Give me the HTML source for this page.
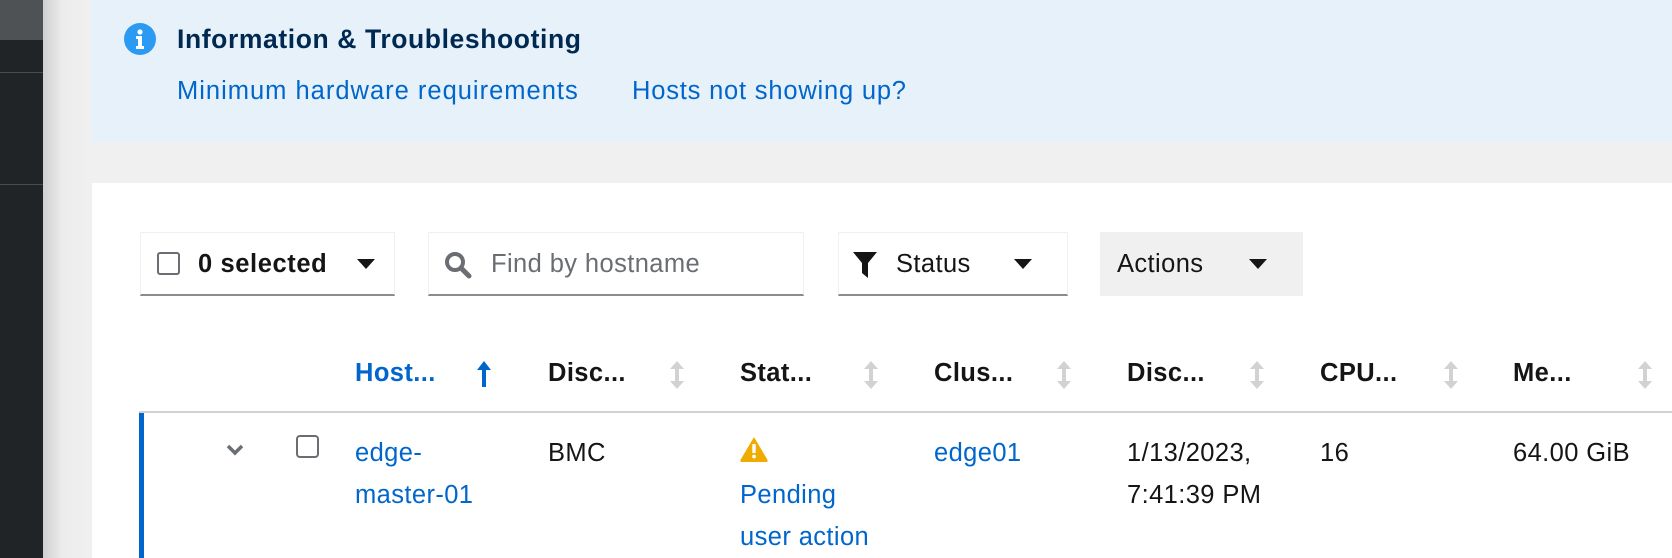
<!DOCTYPE html>
<html><head><meta charset="utf-8"><style>
*{margin:0;padding:0;box-sizing:border-box}
body{width:1672px;height:558px;overflow:hidden;background:#f0f0f0;font-family:"Liberation Sans",sans-serif;position:relative;color:#151515}
.a{position:absolute;white-space:nowrap}
.t{font-size:25.5px;line-height:30px;letter-spacing:0.4px}
.blue{color:#0066cc}
.b{font-weight:bold}
</style></head><body>
<div class="a" style="left:0;top:0;width:43px;height:558px;background:#212427"></div>
<div class="a" style="left:0;top:0;width:43px;height:40px;background:#4f5255"></div>
<div class="a" style="left:0;top:72px;width:43px;height:1px;background:#4a4d50"></div>
<div class="a" style="left:0;top:184px;width:43px;height:1px;background:#4a4d50"></div>
<div class="a" style="left:43px;top:0;width:48px;height:558px;background:linear-gradient(90deg,#d0d0d0,#ececec 40%,#f0f0f0)"></div>
<div class="a" style="left:91px;top:0;width:1581px;height:142px;background:#e7f1fa"></div>
<svg class="a" style="left:124px;top:23px" width="32" height="32" viewBox="0 0 32 32"><circle cx="16" cy="16" r="16" fill="#2b9af3"/><circle cx="16" cy="9" r="2.6" fill="#fff"/><path d="M12 13h6v10h2v3h-8v-3h2v-7h-2z" fill="#fff"/></svg>
<div class="a t b" style="left:177px;top:24px;color:#002952;font-size:26.5px;letter-spacing:0.6px">Information &amp; Troubleshooting</div>
<div class="a t blue" style="left:177px;top:76px;letter-spacing:1px">Minimum hardware requirements</div>
<div class="a t blue" style="left:632px;top:76px;letter-spacing:0.8px">Hosts not showing up?</div>
<div class="a" style="left:92px;top:183px;width:1580px;height:375px;background:#fff"></div>

<div class="a" style="left:140px;top:232px;width:255px;height:64px;border:1px solid #f0f0f0;border-bottom:2px solid #8a8d90"></div>
<div class="a" style="left:157px;top:252px;width:23px;height:23px;border:2px solid #6a6e73;border-radius:3px"></div>
<div class="a t b" style="left:198px;top:249px;letter-spacing:0.6px">0 selected</div>
<svg class="a" style="left:357px;top:259px" width="18" height="10"><path d="M0 0h18L9 10z" fill="#151515"/></svg>

<div class="a" style="left:428px;top:232px;width:376px;height:64px;border:1px solid #f0f0f0;border-bottom:2px solid #8a8d90"></div>
<svg class="a" style="left:444px;top:251px" width="28" height="28" viewBox="0 0 28 28"><circle cx="11" cy="11" r="8" fill="none" stroke="#6a6e73" stroke-width="4"/><path d="M17 17l8 8" stroke="#6a6e73" stroke-width="5" stroke-linecap="round"/></svg>
<div class="a t" style="left:491px;top:249px;color:#6a6e73">Find by hostname</div>

<div class="a" style="left:838px;top:232px;width:230px;height:64px;border:1px solid #f0f0f0;border-bottom:2px solid #8a8d90"></div>
<svg class="a" style="left:853px;top:252px" width="24" height="26" viewBox="0 0 24 26"><path d="M0 0h24L15 11v15l-6-5V11z" fill="#151515"/></svg>
<div class="a t" style="left:896px;top:249px">Status</div>
<svg class="a" style="left:1014px;top:259px" width="18" height="10"><path d="M0 0h18L9 10z" fill="#151515"/></svg>

<div class="a" style="left:1100px;top:232px;width:203px;height:64px;background:#f0f0f0"></div>
<div class="a t" style="left:1117px;top:249px">Actions</div>
<svg class="a" style="left:1249px;top:259px" width="18" height="10"><path d="M0 0h18L9 10z" fill="#151515"/></svg>

<div class="a t b blue" style="left:355px;top:358px">Host...</div>
<svg class="a" style="left:476px;top:361px" width="16" height="26" viewBox="0 0 16 26"><path d="M8 0L15 9H10V26H6V9H1z" fill="#0066cc"/></svg>
<div class="a t b" style="left:548px;top:358px">Disc...</div>
<div class="a t b" style="left:740px;top:358px">Stat...</div>
<div class="a t b" style="left:934px;top:358px">Clus...</div>
<div class="a t b" style="left:1127px;top:358px">Disc...</div>
<div class="a t b" style="left:1320px;top:358px">CPU...</div>
<div class="a t b" style="left:1513px;top:358px">Me...</div>
<svg width="0" height="0" style="position:absolute"><defs><symbol id="s" viewBox="0 0 14 28"><path d="M7 0L14 8H9V20H14L7 28L0 20H5V8H0z" fill="#d2d2d2"/></symbol></defs></svg>
<svg class="a" style="left:670px;top:361px" width="14" height="28"><use href="#s"/></svg>
<svg class="a" style="left:864px;top:361px" width="14" height="28"><use href="#s"/></svg>
<svg class="a" style="left:1057px;top:361px" width="14" height="28"><use href="#s"/></svg>
<svg class="a" style="left:1250px;top:361px" width="14" height="28"><use href="#s"/></svg>
<svg class="a" style="left:1444px;top:361px" width="14" height="28"><use href="#s"/></svg>
<svg class="a" style="left:1638px;top:361px" width="14" height="28"><use href="#s"/></svg>
<div class="a" style="left:139px;top:411px;width:1533px;height:2px;background:#d2d2d2"></div>
<div class="a" style="left:139px;top:413px;width:5px;height:145px;background:#0066cc"></div>

<svg class="a" style="left:226px;top:444px" width="18" height="12" viewBox="0 0 18 12"><path d="M2 2l7 7 7-7" fill="none" stroke="#6a6e73" stroke-width="3.5"/></svg>
<div class="a" style="left:296px;top:435px;width:23px;height:23px;border:2px solid #6a6e73;border-radius:4px"></div>
<div class="a t blue" style="left:355px;top:432px;line-height:42px">edge-<br>master-01</div>
<div class="a t" style="left:548px;top:432px;line-height:42px">BMC</div>
<svg class="a" style="left:740px;top:437px" width="28" height="25" viewBox="0 0 28 25"><path d="M14 1L27 23a1.5 1.5 0 0 1-1 2H2a1.5 1.5 0 0 1-1-2z" fill="#f0ab00" stroke="#f0ab00" stroke-linejoin="round" stroke-width="1"/><rect x="12.3" y="7" width="3.4" height="9" fill="#fff"/><circle cx="14" cy="19.5" r="1.9" fill="#fff"/></svg>
<div class="a t blue" style="left:740px;top:474px;line-height:42px">Pending<br>user action</div>
<div class="a t blue" style="left:934px;top:432px;line-height:42px">edge01</div>
<div class="a t" style="left:1127px;top:432px;line-height:42px">1/13/2023,<br>7:41:39 PM</div>
<div class="a t" style="left:1320px;top:432px;line-height:42px">16</div>
<div class="a t" style="left:1513px;top:432px;line-height:42px">64.00 GiB</div>
</body></html>
